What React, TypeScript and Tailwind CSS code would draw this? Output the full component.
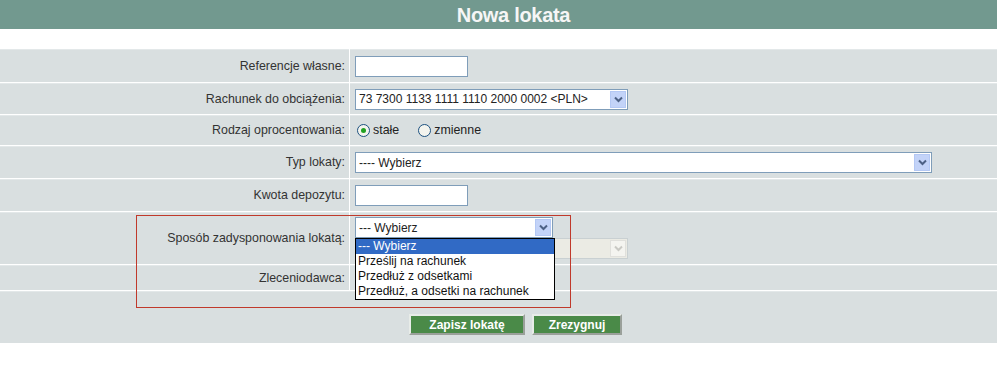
import React from 'react';

const font = "font-['Liberation_Sans',Arial,Helvetica,sans-serif]";

// XP-like arrow button for selects
function Arrow({ disabled = false }: { disabled?: boolean }) {
  return (
    <div
      className={`w-[16px] h-[17px] mr-px flex items-center justify-center border ${
        disabled ? 'bg-[#f4f4f0] border-[#e0e0dc]' : 'bg-[#c3d3f8] border-[#b4c8f4]'
      }`}
    >
      <svg width="9" height="7" viewBox="0 0 9 7">
        <path
          d="M1 1.5 L4.5 5 L8 1.5"
          fill="none"
          stroke={disabled ? '#c9c9c4' : '#4d6185'}
          strokeWidth="2"
        />
      </svg>
    </div>
  );
}

function Select({ value, width, disabled = false }: { value: string; width: string; disabled?: boolean }) {
  return (
    <div
      className={`${width} h-[21px] flex items-center justify-between border ${
        disabled ? 'bg-[#ebebe4] border-[#c9d0d2]' : 'bg-white border-[#7f9db9]'
      }`}
    >
      <span className="pl-[3px] text-[12px] text-[#222] whitespace-nowrap">{value}</span>
      <Arrow disabled={disabled} />
    </div>
  );
}

function TextInput() {
  return <div className="w-[113px] h-[21px] bg-white border border-[#7f9db9]" />;
}

function Radio({ checked }: { checked?: boolean }) {
  return (
    <span className="inline-flex w-[13px] h-[13px] rounded-full border border-[#1c5180] bg-[#f4f4ee] items-center justify-center">
      {checked && <span className="w-[5px] h-[5px] rounded-full bg-[#21a121]" />}
    </span>
  );
}

function Row({ label, height, children }: { label?: string; height: string; children?: React.ReactNode }) {
  return (
    <div className={`grid grid-cols-[349px_1fr] gap-px ${height}`}>
      <div className="bg-[#d9dfe0] border-t border-[#e3e8e9] flex items-center justify-end pr-[4px] text-[#333] text-[12.4px]">
        {label}
      </div>
      <div className="bg-[#d9dfe0] border-t border-[#e3e8e9] flex items-center pl-[5px] relative">{children}</div>
    </div>
  );
}

function Button({ label, width }: { label: string; width: string }) {
  return (
    <button
      className={`${width} h-[21px] bg-[#4a8a48] text-white font-bold text-[12px] border-2 border-t-[#e8ece8] border-l-[#e8ece8] border-r-[#9aa09a] border-b-[#9aa09a]`}
    >
      {label}
    </button>
  );
}

const options = ['--- Wybierz', 'Prześlij na rachunek', 'Przedłuż z odsetkami', 'Przedłuż, a odsetki na rachunek'];

export default function App() {
  return (
    <div className={`${font} text-[12px] w-[997px] bg-white relative`}>
      <div className="h-[29px] bg-[#72998f] flex items-center justify-center">
        <h1 className="text-[20px] font-bold text-[#f6f6f6] tracking-[-0.3px] pl-[30px]">Nowa lokata</h1>
      </div>
      <div className="h-[20px]" />

      <div className="flex flex-col gap-px bg-white">
        <Row label="Referencje własne:" height="h-[33px]">
          <TextInput />
        </Row>
        <Row label="Rachunek do obciążenia:" height="h-[31px]">
          <Select value="73 7300 1133 1111 1110  2000 0002 <PLN>" width="w-[273px]" />
        </Row>
        <Row label="Rodzaj oprocentowania:" height="h-[30px]">
          <div className="flex items-center pl-[2px] gap-[3px] text-[#222] text-[12.4px]">
            <Radio checked />
            <span className="mr-[16px]">stałe</span>
            <Radio />
            <span>zmienne</span>
          </div>
        </Row>
        <Row label="Typ lokaty:" height="h-[32px]">
          <Select value="---- Wybierz" width="w-[577px]" />
        </Row>
        <Row label="Kwota depozytu:" height="h-[32px]">
          <TextInput />
        </Row>
        <Row label="Sposób zadysponowania lokatą:" height="h-[52px]">
          <div className="flex flex-col self-start pt-[4px]">
            <Select value="--- Wybierz" width="w-[198px]" />
            <Select value="" width="w-[273px]" disabled />
          </div>
          <div className="absolute left-[5px] top-[25px] w-[200px] bg-white border border-black z-10 text-[12px] text-[#111] leading-[15px]">
            {options.map((o, i) => (
              <div key={o} className={`pl-[2px] h-[15px] whitespace-nowrap ${i === 0 ? 'bg-[#316ac5] text-white' : ''}`}>
                {o}
              </div>
            ))}
          </div>
        </Row>
        <Row label="Zleceniodawca:" height="h-[25px]" />
        <div className="h-[52px] bg-[#d9dfe0] border-t border-[#e3e8e9] flex items-start pl-[409px] gap-[7px] pt-[22px]">
          <Button label="Zapisz lokatę" width="w-[116px]" />
          <Button label="Zrezygnuj" width="w-[90px]" />
        </div>
      </div>

      {/* red highlight frame */}
      <div className="absolute left-[136px] top-[215px] w-[435px] h-[93px] border border-[#c0392b] pointer-events-none z-20" />
    </div>
  );
}
